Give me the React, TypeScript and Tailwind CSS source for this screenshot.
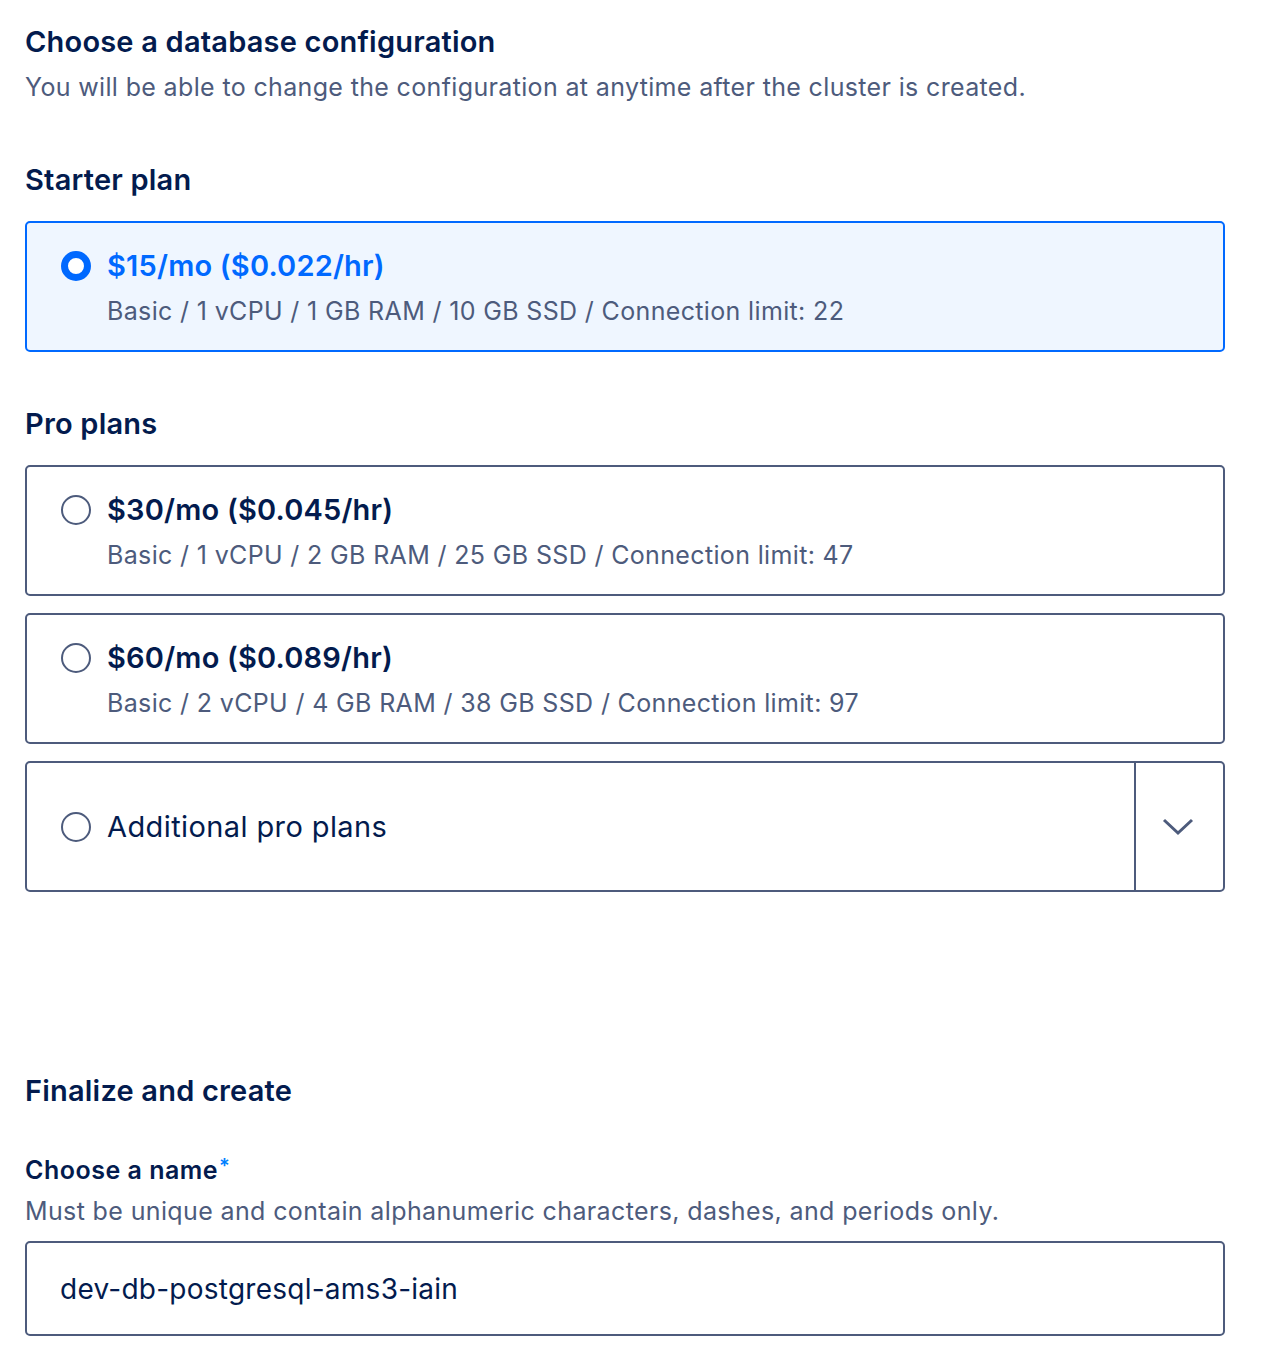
import React, { useState } from 'react';

const plans = [
  { id: 'pro-30', price: '$30/mo ($0.045/hr)', spec: 'Basic / 1 vCPU / 2 GB RAM / 25 GB SSD / Connection limit: 47' },
  { id: 'pro-60', price: '$60/mo ($0.089/hr)', spec: 'Basic / 2 vCPU / 4 GB RAM / 38 GB SSD / Connection limit: 97' },
];

function Radio({ checked }: { checked: boolean }) {
  return checked ? (
    <span className="w-[30px] h-[30px] shrink-0 rounded-full border-[7px] border-[#0069ff] bg-white" />
  ) : (
    <span className="w-[30px] h-[30px] shrink-0 rounded-full border-2 border-[#4d5b7c] bg-white" />
  );
}

export default function App() {
  const [selected, setSelected] = useState('starter');
  const [name, setName] = useState('dev-db-postgresql-ams3-iain');

  return (
    <div className="bg-white text-[#031b4e] pl-[25px] pr-[43px] pt-[24px] pb-[30px] font-['Inter',sans-serif]">
      {/* Header */}
      <h2 className="text-[29px] tracking-[0.2px] leading-[36px] font-semibold">Choose a database configuration</h2>
      <p className="text-[25px] tracking-[0.35px] leading-[32px] text-[#4d5b7c] mt-[11px]">
        You will be able to change the configuration at anytime after the cluster is created.
      </p>

      {/* Starter plan */}
      <h3 className="text-[29px] tracking-[0.2px] leading-[36px] font-semibold mt-[59px]">Starter plan</h3>
      <div
        onClick={() => setSelected('starter')}
        className={`mt-[23px] w-full h-[131px] cursor-pointer rounded-[5px] border-2 px-[34px] pt-[25px] ${
          selected === 'starter' ? 'border-[#0069ff] bg-[#eff6ff]' : 'border-[#4d5b7c] bg-white'
        }`}
      >
        <div className="flex items-center gap-[16px]">
          <Radio checked={selected === 'starter'} />
          <span className={`text-[29px] tracking-[0.2px] leading-[36px] font-semibold ${selected === 'starter' ? 'text-[#0069ff]' : ''}`}>
            $15/mo ($0.022/hr)
          </span>
        </div>
        <div className="pl-[46px] text-[25px] tracking-[0.35px] leading-[32px] text-[#4d5b7c] mt-[11px]">
          Basic / 1 vCPU / 1 GB RAM / 10 GB SSD / Connection limit: 22
        </div>
      </div>

      {/* Pro plans */}
      <h3 className="text-[29px] tracking-[0.2px] leading-[36px] font-semibold mt-[54px]">Pro plans</h3>
      <div className="mt-[23px] flex flex-col gap-[17px]">
        {plans.map((p) => (
          <div
            key={p.id}
            onClick={() => setSelected(p.id)}
            className={`w-full h-[131px] cursor-pointer rounded-[5px] border-2 px-[34px] pt-[25px] ${
              selected === p.id ? 'border-[#0069ff] bg-[#eff6ff]' : 'border-[#4d5b7c] bg-white'
            }`}
          >
            <div className="flex items-center gap-[16px]">
              <Radio checked={selected === p.id} />
              <span className={`text-[29px] tracking-[0.2px] leading-[36px] font-semibold ${selected === p.id ? 'text-[#0069ff]' : ''}`}>
                {p.price}
              </span>
            </div>
            <div className="pl-[46px] text-[25px] tracking-[0.35px] leading-[32px] text-[#4d5b7c] mt-[11px]">{p.spec}</div>
          </div>
        ))}

        {/* Additional plans dropdown */}
        <div
          className={`w-full h-[131px] flex rounded-[5px] border-2 ${
            selected === 'more' ? 'border-[#0069ff] bg-[#eff6ff]' : 'border-[#4d5b7c] bg-white'
          }`}
        >
          <div onClick={() => setSelected('more')} className="flex-1 flex items-center gap-[16px] px-[34px] cursor-pointer">
            <Radio checked={selected === 'more'} />
            <span className="text-[29px] tracking-[0.4px] leading-[36px]">Additional pro plans</span>
          </div>
          <div className="w-[89px] border-l-2 border-[#4d5b7c] flex items-center justify-center pr-[4px]">
            <svg width="32" height="18" viewBox="0 0 32 18" fill="none">
              <path d="M2 2l14 13L30 2" stroke="#4d5b7c" strokeWidth="3" />
            </svg>
          </div>
        </div>
      </div>

      {/* Finalize */}
      <h3 className="text-[29px] tracking-[0.2px] leading-[36px] font-semibold mt-[181px]">Finalize and create</h3>
      <label className="block mt-[45px] text-[25px] tracking-[0.5px] leading-[32px] font-semibold">
        Choose a name
        <span className="relative -top-[6px] ml-[1px] text-[#0080ff] text-[20px] leading-[20px]">*</span>
      </label>
      <p className="text-[25px] tracking-[0.37px] leading-[32px] text-[#4d5b7c] mt-[9px]">
        Must be unique and contain alphanumeric characters, dashes, and periods only.
      </p>
      <input
        value={name}
        onChange={(e) => setName(e.target.value)}
        className="mt-[14px] w-full h-[95px] rounded-[5px] border-2 border-[#4d5b7c] px-[33px] text-[28px] tracking-[0.25px] text-[#031b4e] outline-none"
      />
    </div>
  );
}
